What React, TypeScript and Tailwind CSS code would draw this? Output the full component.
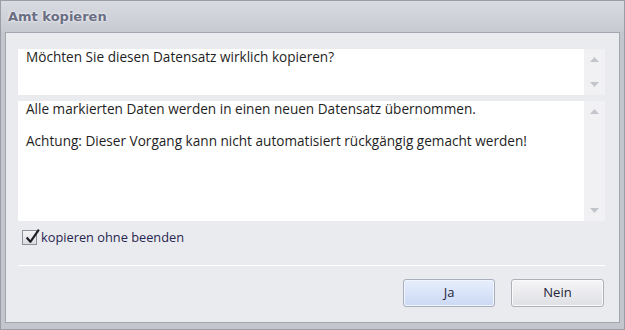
export default function App() {
  return (
    <div className="w-[625px] h-[330px] bg-[#c4c6ce] border border-[#9b9da7] flex flex-col font-['Open_Sans',sans-serif] text-[13.6px] text-[#1f1f24] overflow-hidden">
      {/* Title bar */}
      <div className="h-[31px] shrink-0 bg-gradient-to-b from-[#d9dbe2] to-[#c8cad2] flex items-center pl-[7px]">
        <span className="font-['DejaVu_Sans',sans-serif] font-bold text-[13px] text-[#6a6e83] [text-shadow:0_0_3px_#ffffff]">
          Amt kopieren
        </span>
      </div>

      {/* Content panel */}
      <div className="ml-[4px] mr-[4px] mb-[6px] flex-1 bg-[#eaebef] border border-[#a5a7b0] flex flex-col pl-[12px] pr-[14px] pt-[16px]">
        {/* Question box */}
        <div className="h-[46px] flex bg-white">
          <div className="flex-1 pl-[8px] leading-[16px]">Möchten Sie diesen Datensatz wirklich kopieren?</div>
          <ScrollBar />
        </div>

        {/* Details box */}
        <div className="h-[120px] mt-[6px] flex bg-white">
          <div className="flex-1 pl-[8px] leading-[16px]">
            <p>Alle markierten Daten werden in einen neuen Datensatz übernommen.</p>
            <p className="mt-[16px]">Achtung: Dieser Vorgang kann nicht automatisiert rückgängig gemacht werden!</p>
          </div>
          <ScrollBar />
        </div>

        {/* Checkbox */}
        <label className="mt-[7px] ml-[4px] flex items-center gap-[4px] text-[12.8px] text-[#262650]">
          <span className="w-[15px] h-[15px] relative border border-[#8e9099] bg-gradient-to-b from-[#f4f4f6] to-[#dcdde2]">
            <svg viewBox="0 0 16 16" className="absolute left-[1px] -top-[3px] w-[17px] h-[17px]">
              <path d="M2.5 9 L6 13 L14 1.5" fill="none" stroke="#1c1c22" strokeWidth="2" strokeLinejoin="round" />
            </svg>
          </span>
          <span>kopieren ohne beenden</span>
        </label>

        {/* Separator */}
        <div className="mt-[18px] h-px bg-[#d6d7dd] border-b border-white" />

        {/* Buttons */}
        <div className="mt-[13px] flex justify-end gap-[16px] pr-[1px] text-[13px]">
          <button className="w-[92px] h-[28px] rounded-[3px] border border-[#a9aebc] bg-gradient-to-b from-[#e7eefc] to-[#ccd9f5] text-[#232338] shadow-[inset_0_0_0_1px_#f1f5fe]">
            Ja
          </button>
          <button className="w-[93px] h-[28px] rounded-[3px] border border-[#aeb0b8] bg-gradient-to-b from-[#f5f5f7] to-[#dfe0e4] text-[#232338] shadow-[inset_0_0_0_1px_#fafafb]">
            Nein
          </button>
        </div>
      </div>
    </div>
  )
}

function ScrollBar() {
  return (
    <div className="w-[21px] bg-[#f1f1f4] flex flex-col justify-between items-center py-[8px]">
      <svg width="9" height="5" viewBox="0 0 9 5">
        <path d="M0 5 L4.5 0 L9 5 Z" fill="#c3c5cc" />
      </svg>
      <svg width="9" height="5" viewBox="0 0 9 5">
        <path d="M0 0 L9 0 L4.5 5 Z" fill="#c3c5cc" />
      </svg>
    </div>
  )
}
